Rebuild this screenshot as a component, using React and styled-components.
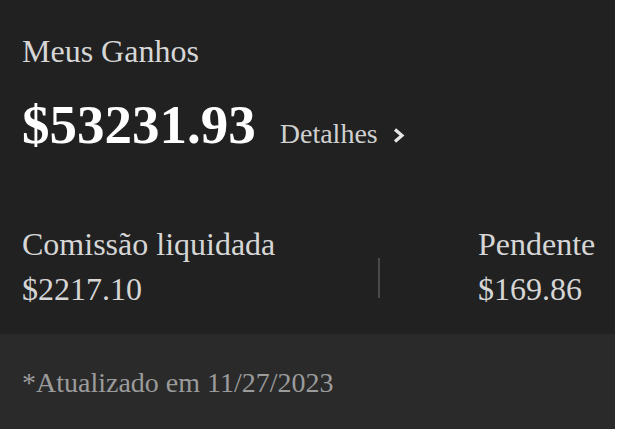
import React from "react";
import styled, { createGlobalStyle } from "styled-components";

const GlobalStyle = createGlobalStyle`
  body {
    margin: 0;
    background: #ffffff;
    font-family: "Liberation Serif", "Times New Roman", serif;
  }
`;

const Card = styled.div`
  width: 615px;
  height: 429px;
  background: #212121;
  display: flex;
  flex-direction: column;
`;

const Main = styled.section`
  flex: 1;
  padding: 32px 0 0 22px;
`;

const Title = styled.div`
  font-size: 32px;
  line-height: 38px;
  color: #d6d6d6;
`;

const AmountRow = styled.div`
  display: flex;
  align-items: baseline;
  gap: 24px;
  margin-top: 24px;
`;

const Amount = styled.div`
  font-size: 55px;
  font-weight: 700;
  line-height: 62px;
  color: #ffffff;
`;

const Details = styled.a`
  display: flex;
  align-items: center;
  gap: 14px;
  font-size: 28px;
  color: #d0d0d0;
  text-decoration: none;
  cursor: pointer;

  svg {
    margin-top: 2px;
  }
`;

const Stats = styled.div`
  display: grid;
  grid-template-columns: 356px 1px auto;
  align-items: center;
  margin-top: 70px;
`;

const Stat = styled.div`
  padding-left: ${({ $indent }) => $indent || 0}px;
  display: flex;
  flex-direction: column;
  gap: 9px;
  font-size: 32px;
  line-height: 36px;
  color: #d6d6d6;
`;

const Divider = styled.div`
  width: 2px;
  height: 40px;
  background: #4a4a4a;
  margin-top: 22px;
`;

const Footer = styled.footer`
  height: 93px;
  background: #2a2a2a;
  display: flex;
  align-items: center;
  padding: 2px 0 0 22px;
  font-size: 28px;
  color: #9b9b9b;
`;

const Chevron = () => (
  <svg width="13" height="17" viewBox="0 0 13 17" fill="none">
    <path d="M3 2.5 L10 8.5 L3 14.5" stroke="#e6e6e6" strokeWidth="3.2" />
  </svg>
);

const App = () => {
  return (
    <>
      <GlobalStyle />
      <Card>
        <Main>
          <Title>Meus Ganhos</Title>
          <AmountRow>
            <Amount>$53231.93</Amount>
            <Details>
              Detalhes
              <Chevron />
            </Details>
          </AmountRow>
          <Stats>
            <Stat>
              <span>Comissão liquidada</span>
              <span>$2217.10</span>
            </Stat>
            <Divider />
            <Stat $indent={99}>
              <span>Pendente</span>
              <span>$169.86</span>
            </Stat>
          </Stats>
        </Main>
        <Footer>*Atualizado em 11/27/2023</Footer>
      </Card>
    </>
  );
};

export default App;
